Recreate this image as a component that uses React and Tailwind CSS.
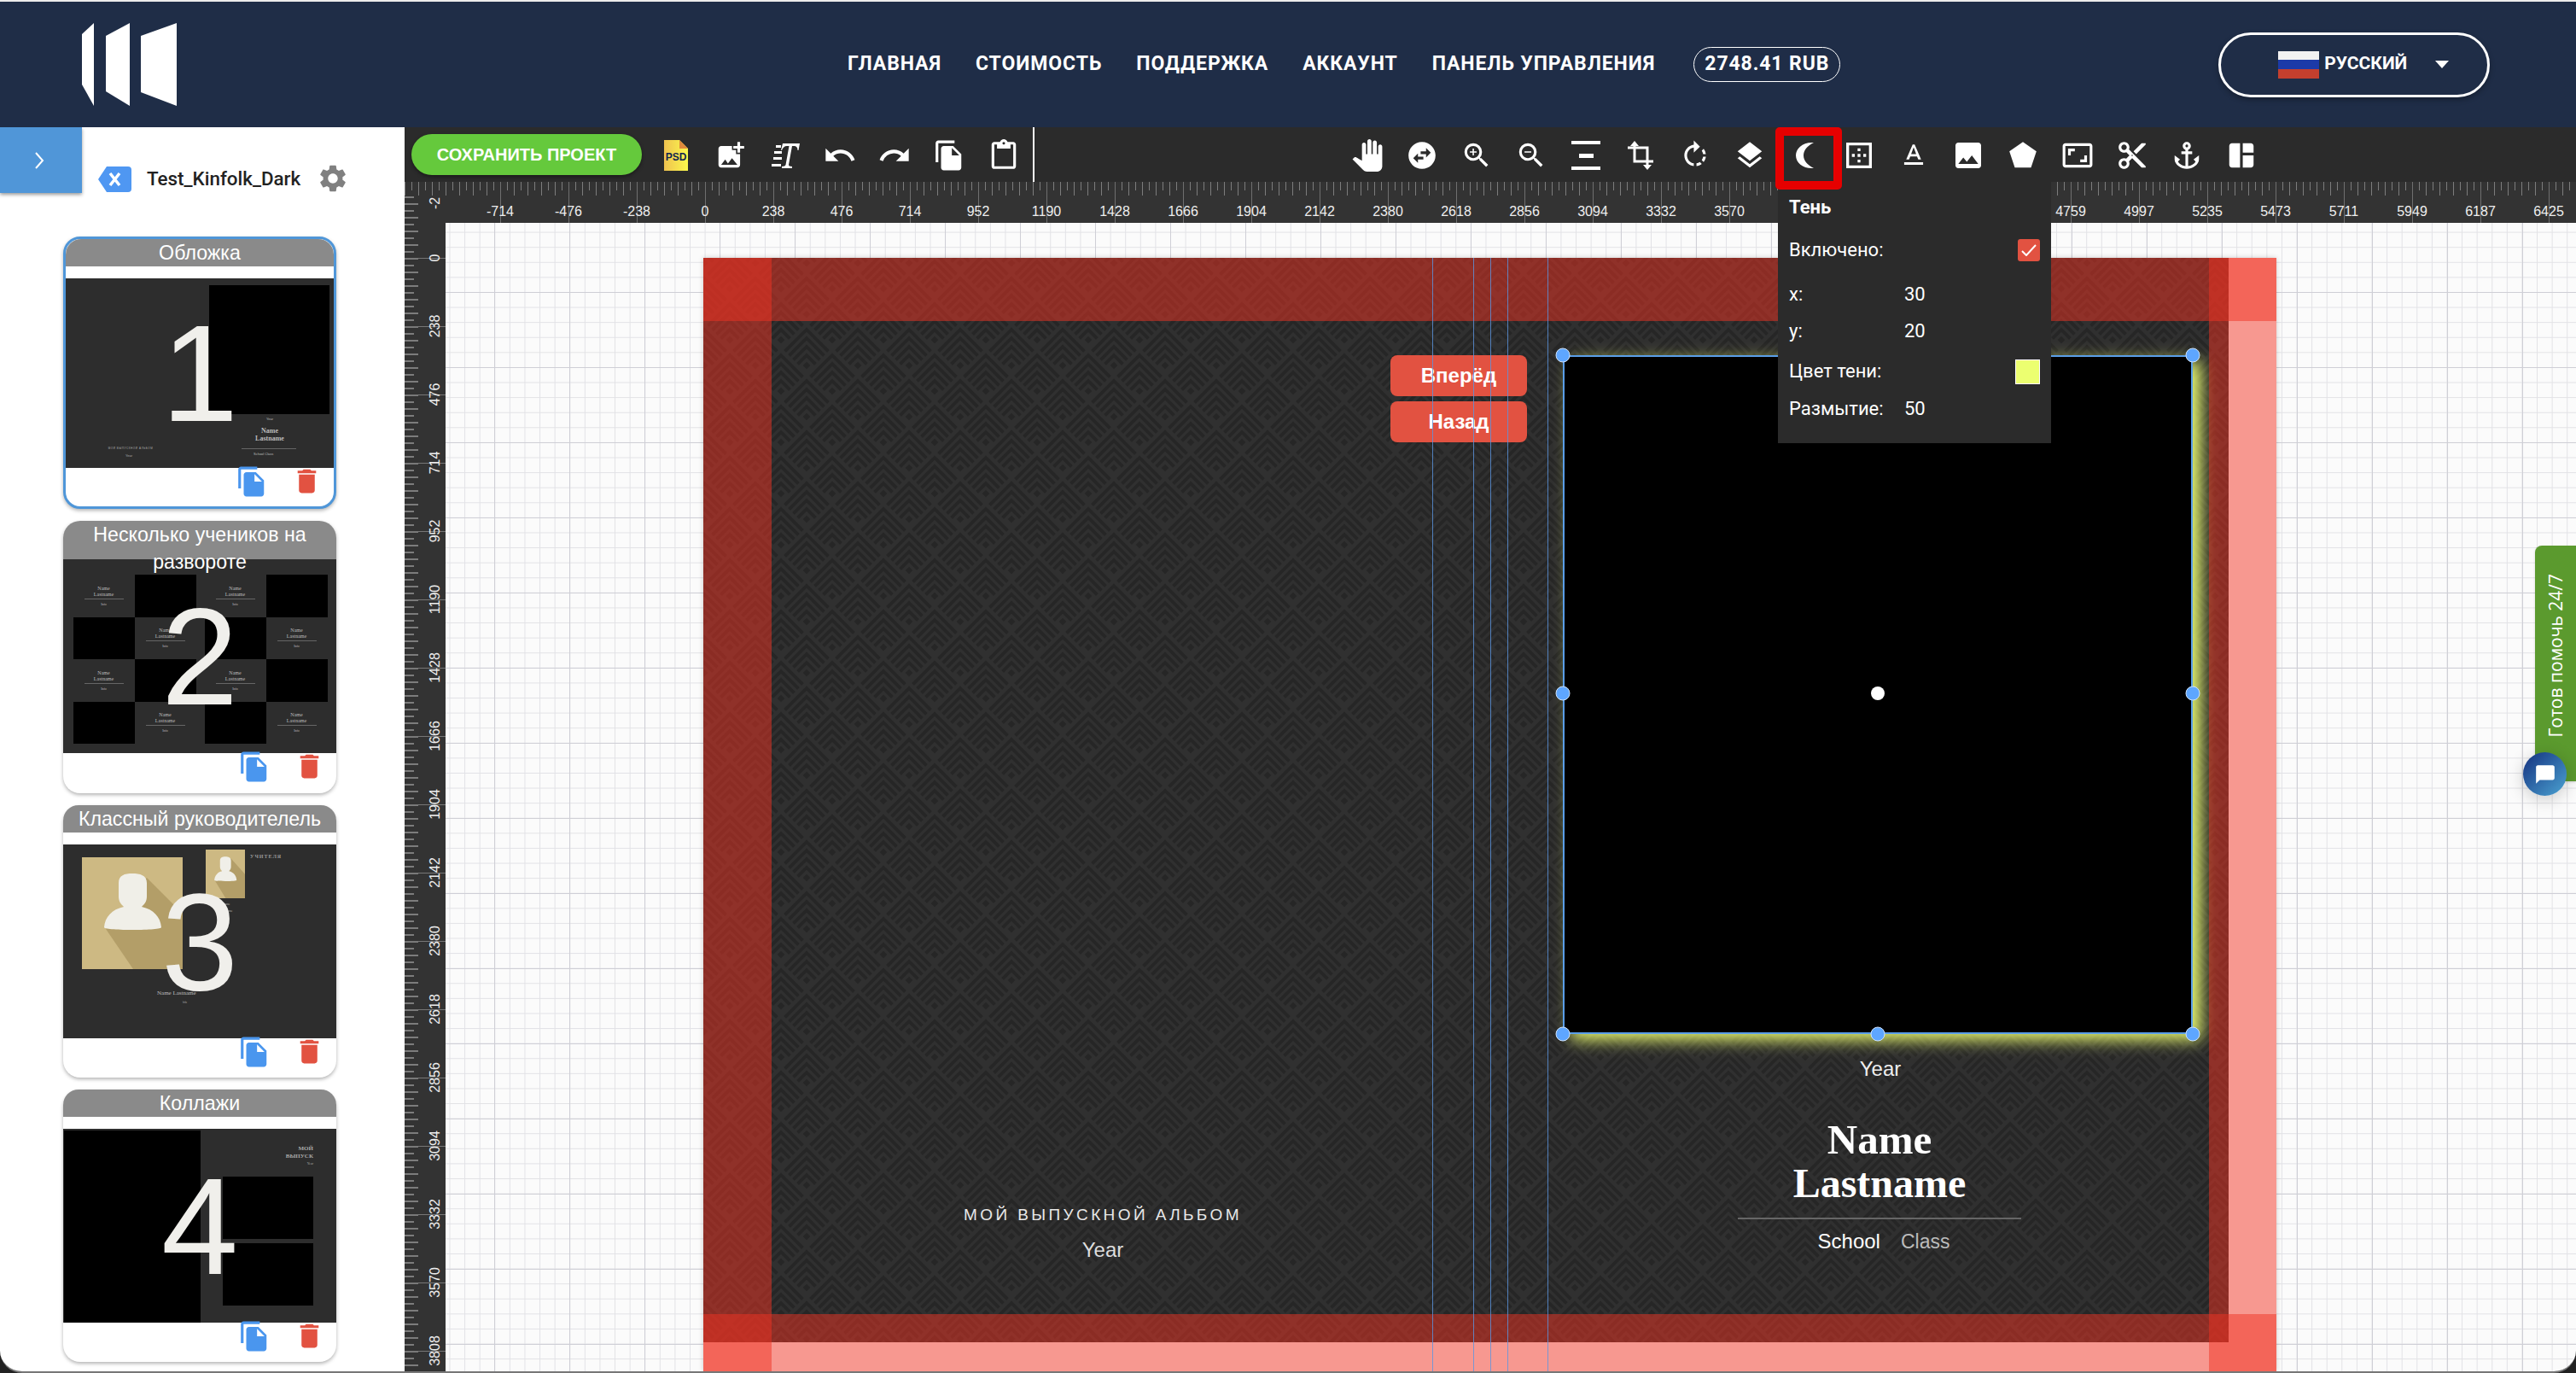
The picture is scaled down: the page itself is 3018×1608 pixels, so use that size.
import {
  MdAddPhotoAlternate, MdUndo, MdRedo, MdFileCopy, MdContentPaste, MdPanTool, MdSwapHorizontalCircle,
  MdZoomIn, MdZoomOut, MdRotateRight, MdLayers, MdBorderOuter, MdTextFormat, MdImage, MdPentagon,
  MdAspectRatio, MdContentCut, MdAnchor, MdSpaceDashboard, MdDelete, MdSettings, MdChatBubble,
} from 'react-icons/md';

// null = label sits under the shadow panel
const topLabels = [
  -714, -476, -238, 0, 238, 476, 714, 952, 1190, 1428, 1666, 1904, 2142, 2380, 2618, 2856, 3094, 3332, 3570,
  null, null, null, null, 4759, 4997, 5235, 5473, 5711, 5949, 6187, 6425,
];
const leftLabels = [0, 238, 476, 714, 952, 1190, 1428, 1666, 1904, 2142, 2380, 2618, 2856, 3094, 3332, 3570, 3808];
const guides = ['left-[854px]', 'left-[902px]', 'left-[922px] w-[2px]', 'left-[942px]', 'left-[989px]'];
const handles = [
  'left-[1007px] top-[114px]', 'left-[1745px] top-[114px]',
  'left-[1007px] top-[510px]', 'left-[1745px] top-[510px]',
  'left-[1007px] top-[909px]', 'left-[1376px] top-[909px]', 'left-[1745px] top-[909px]',
];

const hTicks =
  '[background-image:linear-gradient(to_right,#7c7c7c_1px,transparent_1px),linear-gradient(to_right,#7c7c7c_1px,transparent_1px)] [background-size:16px_16px,16px_10px] [background-position:0_0,8px_0] bg-repeat-x';
const vTicks =
  '[background-image:linear-gradient(to_bottom,#7c7c7c_2px,transparent_2px),linear-gradient(to_bottom,#7c7c7c_2px,transparent_2px)] [background-size:16px_16px,11px_16px] [background-position:0_9px,0_1px] bg-repeat-y';

function Logo() {
  return (
    <svg width="112" height="98" viewBox="0 0 112 98" className="ml-[96px] fill-white">
      <polygon points="14,0 14,97 0,72 0,13 " />
      <polygon points="56,0 56,97 28,80 28,15" />
      <polygon points="111,0 111,97 69,81 69,15" />
    </svg>
  );
}

function PsdIcon() {
  return (
    <svg width="30" height="38" viewBox="0 0 30 38">
      <defs>
        <linearGradient id="psd" x1="0" x2="1" y1="0" y2="0">
          <stop offset="0" stopColor="#efc24f" />
          <stop offset="1" stopColor="#fbf84c" />
        </linearGradient>
      </defs>
      <polygon points="1,1 19,1 29,11 29,37 1,37" fill="url(#psd)" />
      <polygon points="19,1 29,11 19,11" fill="#e08a3c" />
      <text x="15" y="25" textAnchor="middle" fontSize="12" fontWeight="700" fill="#13244f" fontFamily="Liberation Sans">PSD</text>
    </svg>
  );
}

function SpeedTextIcon() {
  return (
    <svg width="33" height="32" viewBox="0 0 33 32" className="fill-white">
      <path d="M13 2h20l-1.5 8h-1c0-3-1-5-5-5h-1.500l-4 22c0 1 1 2 4 2v2H12v-2c3 0 4-1 4.500-2l4-22H18c-3 0-5 2-6 5h-1z" />
      <rect x="5" y="4" width="6" height="3" />
      <rect x="3" y="11" width="9" height="3" />
      <rect x="2" y="18" width="10" height="3" />
      <rect x="0" y="26" width="11" height="3" />
    </svg>
  );
}

function AlignIcon() {
  return (
    <svg width="34" height="34" viewBox="0 0 34 34" className="fill-white">
      <rect x="0" y="0" width="34" height="4" />
      <rect x="9" y="15" width="17" height="5" />
      <rect x="0" y="30" width="34" height="4" />
    </svg>
  );
}

function CropIcon() {
  return (
    <svg width="30" height="36" viewBox="0 0 30 36" className="fill-none stroke-white stroke-[3]">
      <path d="M8 3v22h22M0 9h23v24" />
      <path d="M3 7l5-6 5 6zM18 29l5 6 5-6z" className="fill-white stroke-0" />
    </svg>
  );
}

function MoonIcon() {
  return (
    <svg width="23" height="32" viewBox="0 0 23 32" className="fill-white">
      <path d="M22 1C9 0 1 8 1 16c0 9 9 16 21 15C14 27 10 22 10 16 10 10 14 5 22 1z" />
    </svg>
  );
}

function Tool({ children }) {
  return <div className="flex h-full w-[64px] shrink-0 items-center justify-center pt-[2px] text-white">{children}</div>;
}

function Toolbar() {
  return (
    <div className="flex h-[64px] items-center bg-[#2b2b2b]">
      <button className="ml-[8px] mr-[8px] h-[48px] w-[270px] rounded-full bg-[#65c93c] text-[20px] font-bold text-white shadow-[0_2px_4px_rgba(0,0,0,0.4)]">
        СОХРАНИТЬ ПРОЕКТ
      </button>
      <Tool><PsdIcon /></Tool>
      <Tool><MdAddPhotoAlternate size={38} /></Tool>
      <Tool><SpeedTextIcon /></Tool>
      <Tool><MdUndo size={40} /></Tool>
      <Tool><MdRedo size={40} /></Tool>
      <Tool><MdFileCopy size={38} /></Tool>
      <Tool><MdContentPaste size={38} /></Tool>
      <div className="ml-[2px] mr-[358px] h-full w-[2px] bg-white" />
      <Tool><MdPanTool size={38} /></Tool>
      <Tool><MdSwapHorizontalCircle size={38} /></Tool>
      <Tool><MdZoomIn size={38} /></Tool>
      <Tool><MdZoomOut size={38} /></Tool>
      <Tool><AlignIcon /></Tool>
      <Tool><CropIcon /></Tool>
      <Tool><MdRotateRight size={38} /></Tool>
      <Tool><MdLayers size={38} /></Tool>
      <Tool><MoonIcon /></Tool>
      <Tool><MdBorderOuter size={40} /></Tool>
      <Tool><MdTextFormat size={38} /></Tool>
      <Tool><MdImage size={40} /></Tool>
      <Tool><MdPentagon size={38} /></Tool>
      <Tool><MdAspectRatio size={38} /></Tool>
      <Tool><MdContentCut size={38} /></Tool>
      <Tool><MdAnchor size={38} /></Tool>
      <Tool><MdSpaceDashboard size={38} /></Tool>
    </div>
  );
}

function Header() {
  return (
    <header className="flex h-[147px] shrink-0 items-center bg-[#1f2d47] text-white">
      <Logo />
      <nav className="ml-[785px] flex items-center gap-[40px] font-['Roboto',sans-serif] text-[23px] font-bold tracking-[0.9px]">
        <span>ГЛАВНАЯ</span>
        <span>СТОИМОСТЬ</span>
        <span>ПОДДЕРЖКА</span>
        <span>АККАУНТ</span>
        <span>ПАНЕЛЬ УПРАВЛЕНИЯ</span>
        <span className="ml-[5px] flex h-[41px] w-[172px] items-center justify-center rounded-full border border-white">2748.41 RUB</span>
      </nav>
      <div className="ml-[443px] flex h-[76px] w-[318px] items-center rounded-full border-[3px] border-white pl-[67px] shadow-[0_3px_6px_rgba(0,0,0,0.3)]">
        <div className="flex h-[32px] w-[48px] flex-col">
          <div className="flex-1 bg-[#f2f2f2]" />
          <div className="flex-1 bg-[#1c3aa8]" />
          <div className="flex-1 bg-[#c43f2e]" />
        </div>
        <span className="-mt-[2px] ml-[6px] font-['Roboto',sans-serif] text-[21px] font-bold">РУССКИЙ</span>
        <span className="ml-[33px] h-0 w-0 border-x-[8px] border-t-[9px] border-x-transparent border-t-white" />
      </div>
    </header>
  );
}

function XBadge() {
  return (
    <svg width="39" height="30" viewBox="0 0 39 30">
      <path d="M10 0h25a4 4 0 0 1 4 4v22a4 4 0 0 1-4 4H10L0 15z" fill="#4f97f2" />
      <path d="M14 8l11 14M25 8L14 22" stroke="#fff" strokeWidth="3.5" fill="none" />
    </svg>
  );
}

function MiniName() {
  return (
    <div className="flex h-full flex-col items-center justify-center font-['Liberation_Serif',serif] text-[6px] leading-[7px] text-[#bbb]">
      <span>Name</span>
      <span>Lastname</span>
      <span className="my-[1px] h-px w-[46px] bg-[#666]" />
      <span className="mt-[2px] text-[4px] leading-[5px]">Info</span>
    </div>
  );
}

function Figure() {
  return (
    <svg viewBox="0 0 118 131" preserveAspectRatio="none" className="h-full w-full">
      <rect width="118" height="131" fill="#cdb983" />
      <polygon points="76,24 118,66 118,131 60,131 28,84" fill="#b39e68" />
      <path d="M43 30c0-9 7-11 16-11s17 2 17 11v16c0 6-3 9-6 12 14 3 22 12 23 24 0 2-14 3-34 3s-33-1-33-3c1-12 9-21 23-24-3-3-6-6-6-12z" fill="#f0efe8" />
    </svg>
  );
}

function ThumbOne() {
  return (
    <>
      <div className="absolute left-[168px] top-[8px] h-[151px] w-[141px] bg-black" />
      <div className="absolute left-[209px] top-[162px] flex w-[60px] flex-col items-center text-[#bbb]">
        <span className="text-[4px] leading-[6px]">Year</span>
        <span className="mt-[6px] font-['Liberation_Serif',serif] text-[8px] font-bold leading-[9px]">Name</span>
        <span className="font-['Liberation_Serif',serif] text-[8px] font-bold leading-[9px]">Lastname</span>
      </div>
      <div className="absolute left-[206px] top-[199px] h-px w-[64px] bg-[#666]" />
      <div className="absolute left-[220px] top-[203px] text-[4px] leading-[5px] text-[#bbb]">School  Class</div>
      <div className="absolute left-[45px] top-[197px] w-[62px] whitespace-nowrap text-center text-[3px] leading-[4px] tracking-[0.6px] text-[#aaa]">МОЙ ВЫПУСКНОЙ АЛЬБОМ</div>
      <div className="absolute left-[70px] top-[205px] text-[4px] leading-[5px] text-[#aaa]">Year</div>
    </>
  );
}

function ThumbTwo() {
  const cells = [0, 1, 2, 3, 4, 5, 6, 7];
  const Page = () => (
    <div className="grid h-[198px] w-[144px] grid-cols-2 grid-rows-4">
      {cells.map((i) =>
        (i + (i > 1 && i < 4 ? 1 : 0) + (i > 5 ? 1 : 0)) % 2 === 1 ? <div key={i} className="bg-black" /> : <MiniName key={i} />
      )}
    </div>
  );
  return (
    <div className="flex h-full justify-center gap-[10px] pl-[1px] pt-[18px]">
      <Page />
      <Page />
    </div>
  );
}

function ThumbThree() {
  return (
    <>
      <div className="absolute left-[22px] top-[15px] h-[131px] w-[118px]"><Figure /></div>
      <div className="absolute left-[167px] top-[6px] h-[57px] w-[46px]"><Figure /></div>
      <div className="absolute left-[219px] top-[11px] font-['Liberation_Serif',serif] text-[6px] font-bold leading-[7px] tracking-[1px] text-[#999]">УЧИТЕЛЯ</div>
      <div className="absolute left-[183px] top-[66px] flex flex-col items-center font-['Liberation_Serif',serif] text-[4px] leading-[8px] text-[#aaa]">
        <span>Name</span>
        <span>Lastname</span>
        <span>Info</span>
      </div>
      <div className="absolute left-[110px] top-[170px] font-['Liberation_Serif',serif] text-[7px] leading-[8px] text-[#bbb]">Name Lastname</div>
      <div className="absolute left-[140px] top-[183px] text-[3px] leading-[4px] text-[#aaa]">Info</div>
    </>
  );
}

function ThumbFour() {
  return (
    <>
      <div className="absolute left-[1px] top-[2px] h-[225px] w-[160px] bg-black" />
      <div className="absolute left-[187px] top-[56px] h-[73px] w-[106px] bg-black" />
      <div className="absolute left-[187px] top-[134px] h-[73px] w-[106px] bg-black" />
      <div className="absolute right-[27px] top-[19px] flex flex-col items-end font-['Liberation_Serif',serif] text-[7px] font-bold leading-[9px] text-[#aaa]">
        <span>МОЙ</span>
        <span>ВЫПУСК</span>
        <span className="text-[4px] font-normal leading-[7px]">Year</span>
      </div>
    </>
  );
}

function Card({ title, number, selected, tall, children }) {
  return (
    <div
      className={
        selected
          ? 'relative flex h-[319px] w-[320px] flex-col rounded-[20px] border-[3px] border-[#4f96d8] bg-white shadow-[0_2px_4px_rgba(0,0,0,0.3)]'
          : 'relative flex h-[319px] w-[320px] flex-col rounded-[20px] bg-white shadow-[0_2px_4px_rgba(0,0,0,0.3)]'
      }
    >
      <div
        className={
          tall
            ? 'relative z-10 h-[45px] shrink-0 rounded-t-[20px] bg-[#8a8a8a] text-center text-[23.2px] leading-[32px] text-white'
            : 'relative z-10 h-[32px] shrink-0 rounded-t-[18px] bg-[#8a8a8a] text-center text-[23.2px] leading-[32px] text-white'
        }
      >
        {title}
      </div>
      {!tall && <div className="h-[14px] shrink-0" />}
      <div className={selected ? 'relative h-[222px] shrink-0 bg-[#2d2d2d]' : 'relative h-[227px] shrink-0 bg-[#2d2d2d]'}>
        {children}
        <div className="absolute inset-0 flex items-center justify-center text-[162px] leading-none text-[#f0efeb]">{number}</div>
      </div>
      <div className="relative flex justify-end gap-[27px] pr-[13px]">
        <MdFileCopy size={38} className="-mt-[3px] text-[#4a96ee]" />
        <MdDelete size={37} className="-mt-[3px] text-[#e25241]" />
      </div>
    </div>
  );
}

function Sidebar() {
  return (
    <aside className="w-[474px] shrink-0 bg-white">
      <div className="flex h-[128px] items-start">
        <div className="flex h-[77px] w-[96px] items-center justify-center bg-[#5096d8] pr-[4px] shadow-[0_2px_4px_rgba(0,0,0,0.4)]">
          <svg width="12" height="20" viewBox="0 0 12 20" className="fill-none stroke-white stroke-2">
            <path d="M2 1l8 9-8 9" />
          </svg>
        </div>
        <div className="ml-[19px] mt-[43px] flex items-center">
          <XBadge />
          <span className="-mt-[3px] ml-[18px] w-[199px] font-['Roboto',sans-serif] text-[22.4px] font-medium leading-[32px] text-[#222]">Test_Kinfolk_Dark</span>
          <MdSettings size={38} className="-mt-[2px] text-[#808080]" />
        </div>
      </div>
      <div className="flex flex-col gap-[14px] pl-[74px]">
        <Card title="Обложка" number="1" selected><ThumbOne /></Card>
        <Card title="Несколько учеников на развороте" number="2" tall><ThumbTwo /></Card>
        <Card title="Классный руководителель" number="3"><ThumbThree /></Card>
        <Card title="Коллажи" number="4"><ThumbFour /></Card>
      </div>
    </aside>
  );
}

function TopRuler() {
  return (
    <div className={`relative h-[48px] shrink-0 bg-[#333] ${hTicks}`}>
      {topLabels.map((label, i) =>
        label === null ? null : (
          <div key={label} className="absolute top-0 h-[48px] w-px bg-[#6f6f6f]" style={{ left: 64 + i * 80 }}>
            <span className="absolute left-0 top-[25px] -translate-x-1/2 text-[16px] leading-[20px] text-[#eee]">{label}</span>
          </div>
        )
      )}
    </div>
  );
}

function LeftRuler() {
  return (
    <div className="flex w-[48px] shrink-0 flex-col bg-[#333]">
      <div className={`h-[16px] shrink-0 ${hTicks}`} />
      <div className={`relative flex-1 overflow-hidden ${vTicks}`}>
        <span className="absolute left-[36px] top-[-1px] -translate-x-1/2 -rotate-90 text-[16px] leading-[20px] text-[#eee]">-2</span>
        {leftLabels.map((label, i) => (
          <div key={label} className="absolute left-0 h-px w-[48px] bg-[#777]" style={{ top: 73 + i * 80 }}>
            <span className="absolute left-[36px] top-0 -translate-x-1/2 -translate-y-1/2 -rotate-90 whitespace-nowrap text-[16px] leading-[20px] text-[#eee]">{label}</span>
          </div>
        ))}
      </div>
    </div>
  );
}

function SpreadPattern() {
  const Unit = ({ x, y }) => (
    <g transform={`translate(${x} ${y})`}>
      <polygon points="0,-13.500 4.500,-9 0,-4.500 -4.500,-9" fill="#262626" stroke="none" />
      <polyline points="-10.500,-10.500 0,-21 10.500,-10.500" />
      <polyline points="-15.500,-15.500 0,-31 15.500,-15.500" />
      <polyline points="-20.500,-20.500 0,-41 20.500,-20.500" />
      <polyline points="-25.500,-25.500 0,-51 25.500,-25.500" />
    </g>
  );
  return (
    <svg className="absolute inset-0 h-full w-full">
      <defs>
        <pattern id="chevrons" width="60" height="60" patternUnits="userSpaceOnUse">
          <rect width="60" height="60" fill="#303030" />
          <g fill="none" stroke="#262626" strokeWidth="4">
            <Unit x={31} y={45} />
            <Unit x={1} y={15} />
            <Unit x={61} y={15} />
            <Unit x={31} y={105} />
            <Unit x={1} y={75} />
            <Unit x={61} y={75} />
          </g>
        </pattern>
      </defs>
      <rect width="100%" height="100%" fill="url(#chevrons)" />
    </svg>
  );
}

function Spread() {
  return (
    <div className="absolute left-[302px] top-[41px] h-[1304px] w-[1843px] bg-white font-['Liberation_Sans',sans-serif] shadow-[0_0_6px_rgba(0,0,0,0.2)]">
      <div className="absolute left-0 top-0 h-[1270px] w-[1787px]">
        <SpreadPattern />
      </div>

      <div className="absolute left-[168px] top-[1107px] flex w-[600px] flex-col items-center text-[#e8e8e8]">
        <span className="text-[19px] leading-[28px] tracking-[3.4px]">МОЙ ВЫПУСКНОЙ АЛЬБОМ</span>
        <span className="mt-[12px] text-[24px] leading-[30px] text-[#ddd]">Year</span>
      </div>

      <div className="absolute left-[1078px] top-[935px] flex w-[600px] flex-col items-center text-white">
        <span className="ml-[2px] text-[24px] leading-[30px] text-[#eee]">Year</span>
        <span className="mt-[42px] font-['Liberation_Serif',serif] text-[49px] font-bold leading-[51px]">Name</span>
        <span className="font-['Liberation_Serif',serif] text-[48px] font-bold leading-[51px]">Lastname</span>
        <span className="mt-[15px] h-[2px] w-[332px] bg-[#666]" />
        <span className="ml-[10px] mt-[11px] flex items-baseline gap-[24px] text-[24px] leading-[30px]">
          <span>School</span>
          <span className="text-[23px] text-[#bbb]">Class</span>
        </span>
      </div>

      <div className="absolute left-[1007px] top-[114px] h-[795px] w-[738px] bg-black shadow-[10px_7px_18px_#e8f96e]" />

      <div className="absolute left-0 top-0 h-full w-[80px] bg-[#ef3121]/50" />
      <div className="absolute left-0 top-0 h-[74px] w-full bg-[#ef3121]/50" />
      <div className="absolute right-0 top-0 h-full w-[79px] bg-[#ef3121]/50" />
      <div className="absolute bottom-0 left-0 h-[67px] w-full bg-[#ef3121]/50" />

      <div className="absolute left-[805px] top-[114px] flex flex-col gap-[6px] text-[24px] font-bold text-white">
        <button className="h-[48px] w-[160px] rounded-[8px] bg-[#e25241]">Вперёд</button>
        <button className="h-[48px] w-[160px] rounded-[8px] bg-[#e25241]">Назад</button>
      </div>

      {guides.map((g) => (
        <div key={g} className={`absolute top-0 h-full w-px bg-[#5b95e0]/80 ${g}`} />
      ))}

      <div className="absolute left-[1007px] top-[114px] h-[795px] w-[738px] border-2 border-[#5a9ee8]" />
      {handles.map((h) => (
        <div key={h} className={`absolute h-[17px] w-[17px] -translate-x-1/2 -translate-y-1/2 rounded-full border border-[#cfe2fb] bg-[#5ea6ff] ${h}`} />
      ))}
      <div className="absolute left-[1376px] top-[510px] h-[16px] w-[16px] -translate-x-1/2 -translate-y-1/2 rounded-full bg-white" />
    </div>
  );
}

function ShadowPanel() {
  return (
    <div className="absolute left-[2083px] top-[213px] flex h-[306px] w-[320px] flex-col bg-[#2b2b2b] px-[13px] pt-[14px] font-['Roboto',sans-serif] text-[22px] leading-[32px] text-white">
      <div className="font-bold">Тень</div>
      <div className="mt-[18px] flex items-center justify-between">
        <span>Включено:</span>
        <span className="flex h-[26px] w-[26px] items-center justify-center rounded-[3px] bg-[#e25241]">
          <svg width="18" height="14" viewBox="0 0 18 14" className="fill-none stroke-white stroke-2">
            <path d="M1 8l5 5L17 1" />
          </svg>
        </span>
      </div>
      <div className="mt-[20px] flex"><span className="w-[135px]">x:</span><span>30</span></div>
      <div className="mt-[11px] flex"><span className="w-[135px]">y:</span><span>20</span></div>
      <div className="mt-[15px] flex items-center justify-between">
        <span>Цвет тени:</span>
        <span className="h-[29px] w-[29px] border border-white bg-[#ecff70]" />
      </div>
      <div className="mt-[12px] flex"><span className="w-[135px]">Размытие:</span><span>50</span></div>
    </div>
  );
}

function HelpTab() {
  return (
    <>
      <div className="absolute right-0 top-[639px] flex h-[276px] w-[48px] items-start justify-center rounded-l-[8px] bg-[#5b9a2e] pt-[33px] shadow-[0_1px_3px_rgba(0,0,0,0.15)]">
        <span className="rotate-180 font-['Open_Sans',sans-serif] text-[21px] leading-[48px] text-white [writing-mode:vertical-rl]">Готов помочь 24/7</span>
      </div>
      <div className="absolute left-[2956px] top-[881px] flex h-[51px] w-[51px] items-center justify-center rounded-full bg-[linear-gradient(135deg,#14307f,#4ba3d2)] shadow-[0_4px_20px_rgba(0,0,0,0.2)]">
        <MdChatBubble size={26} className="text-white" />
      </div>
    </>
  );
}

export default function App() {
  return (
    <div className="relative h-[1608px] w-[3018px] overflow-hidden bg-[#222] font-['Liberation_Sans',sans-serif]">
      <div className="h-[2px] bg-[#ececec]" />
      <Header />
      <div className="flex h-[1459px] overflow-hidden rounded-b-[26px] border-b-2 border-[#777]">
        <Sidebar />
        <main className="flex min-w-0 flex-1 flex-col">
          <Toolbar />
          <div className="flex min-h-0 flex-1">
            <LeftRuler />
            <div className="flex min-w-0 flex-1 flex-col">
              <TopRuler />
              <div className="relative min-h-0 flex-1 overflow-hidden bg-[#fbfbfb] [background-image:linear-gradient(to_right,#cfcfd6_1px,transparent_1px),linear-gradient(to_bottom,#cfcfd6_1px,transparent_1px),linear-gradient(to_right,#e2e2e6_1px,transparent_1px),linear-gradient(to_bottom,#e2e2e6_1px,transparent_1px)] [background-size:88px_88px,88px_88px,17.6px_17.6px,17.6px_17.6px] [background-position:57px_0,0_81px,4.5px_0,0_10.6px]">
                <Spread />
              </div>
            </div>
          </div>
        </main>
      </div>
      <ShadowPanel />
      <div className="absolute left-[2080px] top-[149px] h-[73px] w-[78px] rounded-[5px] border-[10px] border-[#e60000]" />
      <HelpTab />
    </div>
  );
}
